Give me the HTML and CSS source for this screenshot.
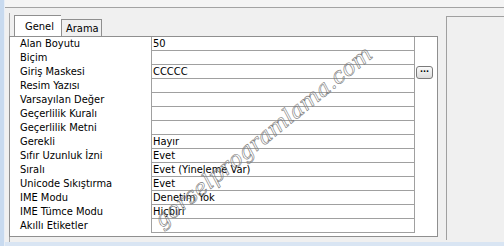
FILE: index.html
```html
<!DOCTYPE html>
<html lang="tr">

<head>
    <meta charset="utf-8" />
    <title>Alan Özellikleri</title>
    <link rel="stylesheet" href="styles.css">
</head>

<body>
    <div class="window">
        <div class="side-strip"></div>
        <div class="main">
            <div class="topbar"></div>
            <div class="content">
                <div class="sheet">
                    <div class="tabs">
                        <div class="tab active">Genel</div>
                        <div class="tab">Arama</div>
                    </div>
                    <div class="panel">
                        <div class="props">
                            <div class="lbl">Alan Boyutu</div><div class="val">50</div><div class="act"></div>
                            <div class="lbl">Biçim</div><div class="val"></div><div class="act"></div>
                            <div class="lbl">Giriş Maskesi</div><div class="val">CCCCC</div><div class="act"><span class="dots-btn">...</span></div>
                            <div class="lbl">Resim Yazısı</div><div class="val"></div><div class="act"></div>
                            <div class="lbl">Varsayılan Değer</div><div class="val"></div><div class="act"></div>
                            <div class="lbl">Geçerlilik Kuralı</div><div class="val"></div><div class="act"></div>
                            <div class="lbl">Geçerlilik Metni</div><div class="val"></div><div class="act"></div>
                            <div class="lbl">Gerekli</div><div class="val">Hayır</div><div class="act"></div>
                            <div class="lbl">Sıfır Uzunluk İzni</div><div class="val">Evet</div><div class="act"></div>
                            <div class="lbl">Sıralı</div><div class="val">Evet (Yineleme Var)</div><div class="act"></div>
                            <div class="lbl">Unicode Sıkıştırma</div><div class="val">Evet</div><div class="act"></div>
                            <div class="lbl">IME Modu</div><div class="val">Denetim Yok</div><div class="act"></div>
                            <div class="lbl">IME Tümce Modu</div><div class="val">Hiçbiri</div><div class="act"></div>
                            <div class="lbl">Akıllı Etiketler</div><div class="val"></div><div class="act"></div>
                        </div>
                    </div>
                </div>
                <div class="side-panel"></div>
            </div>
            <div class="bottom-strip"></div>
        </div>
        <div class="watermark">gorselprogramlama.com</div>
    </div>
</body>

</html>
```

FILE: styles.css
```css
body {
    margin: 0;
    padding: 0;
    background-color: #f0f0f0;
    font-family: "DejaVu Sans Condensed", "DejaVu Sans", sans-serif;
    font-size: 11px;
    color: #000;
}

.window {
    position: relative;
    display: flex;
    width: 504px;
    height: 246px;
    overflow: hidden;
}

.side-strip {
    width: 4px;
    background-color: #c8daef;
    border-right: 1px solid #e8eef6;
}

.main {
    flex: 1;
    display: flex;
    flex-direction: column;
}

.topbar {
    height: 7px;
    background-color: #f4f4f4;
    border-bottom: 1px solid #a3a3a3;
}

.content {
    flex: 1;
    display: flex;
}

.sheet {
    margin-left: 4px;
    margin-top: 5px;
    padding-top: 2px;
    border-left: 1px solid #a8a8a8;
}

.tabs {
    display: flex;
    align-items: flex-end;
    height: 21px;
    padding-left: 4px;
}

.tab {
    height: 16px;
    line-height: 17px;
    padding: 0 0 0 4px;
    background-color: #f0f0f0;
    border: 1px solid #8f8f8f;
    border-bottom: none;
    width: 35px;
}

.tab.active {
    height: 20px;
    line-height: 22px;
    width: 36px;
    padding: 0 0 0 10px;
    background-color: #fff;
    border-right: none;
}

.panel {
    width: 427px;
    margin-left: -1px;
    background-color: #fff;
    border: 1px solid #8f8f8f;
    padding-bottom: 3px;
}

.props {
    display: grid;
    grid-template-columns: 141px 264px 21px;
    grid-auto-rows: 14px;
}

.lbl {
    padding-left: 10px;
    line-height: 14px;
    white-space: nowrap;
}

.val {
    border-left: 1px solid #a0a0a0;
    border-right: 1px solid #a0a0a0;
    border-bottom: 1px solid #a0a0a0;
    padding-left: 1px;
    line-height: 13px;
    white-space: nowrap;
}

.dots-btn {
    display: block;
    width: 15px;
    height: 11px;
    margin: 1px 0 0 1px;
    border: 1px solid #7a7a7a;
    border-radius: 3px;
    background: linear-gradient(#fbfbfb, #dcdcdc);
    font-family: "DejaVu Sans", sans-serif;
    font-weight: bold;
    font-size: 8px;
    line-height: 5px;
    text-align: center;
}

.side-panel {
    flex: 1;
    margin-left: 8px;
    margin-top: 8px;
    margin-bottom: 2px;
    border-left: 1px solid #a0a0a0;
    border-top: 1px solid #a0a0a0;
    background-color: #f0f0f0;
}

.bottom-strip {
    height: 4px;
    background-color: #d9e5f3;
}

.watermark {
    position: absolute;
    left: 166px;
    top: 206px;
    font-family: "DejaVu Serif", serif;
    font-style: italic;
    font-size: 22px;
    line-height: 28px;
    color: transparent;
    -webkit-text-stroke: 0.6px #7a7a7a;
    transform: rotate(-39deg);
    transform-origin: left bottom;
    white-space: nowrap;
    pointer-events: none;
}
```
